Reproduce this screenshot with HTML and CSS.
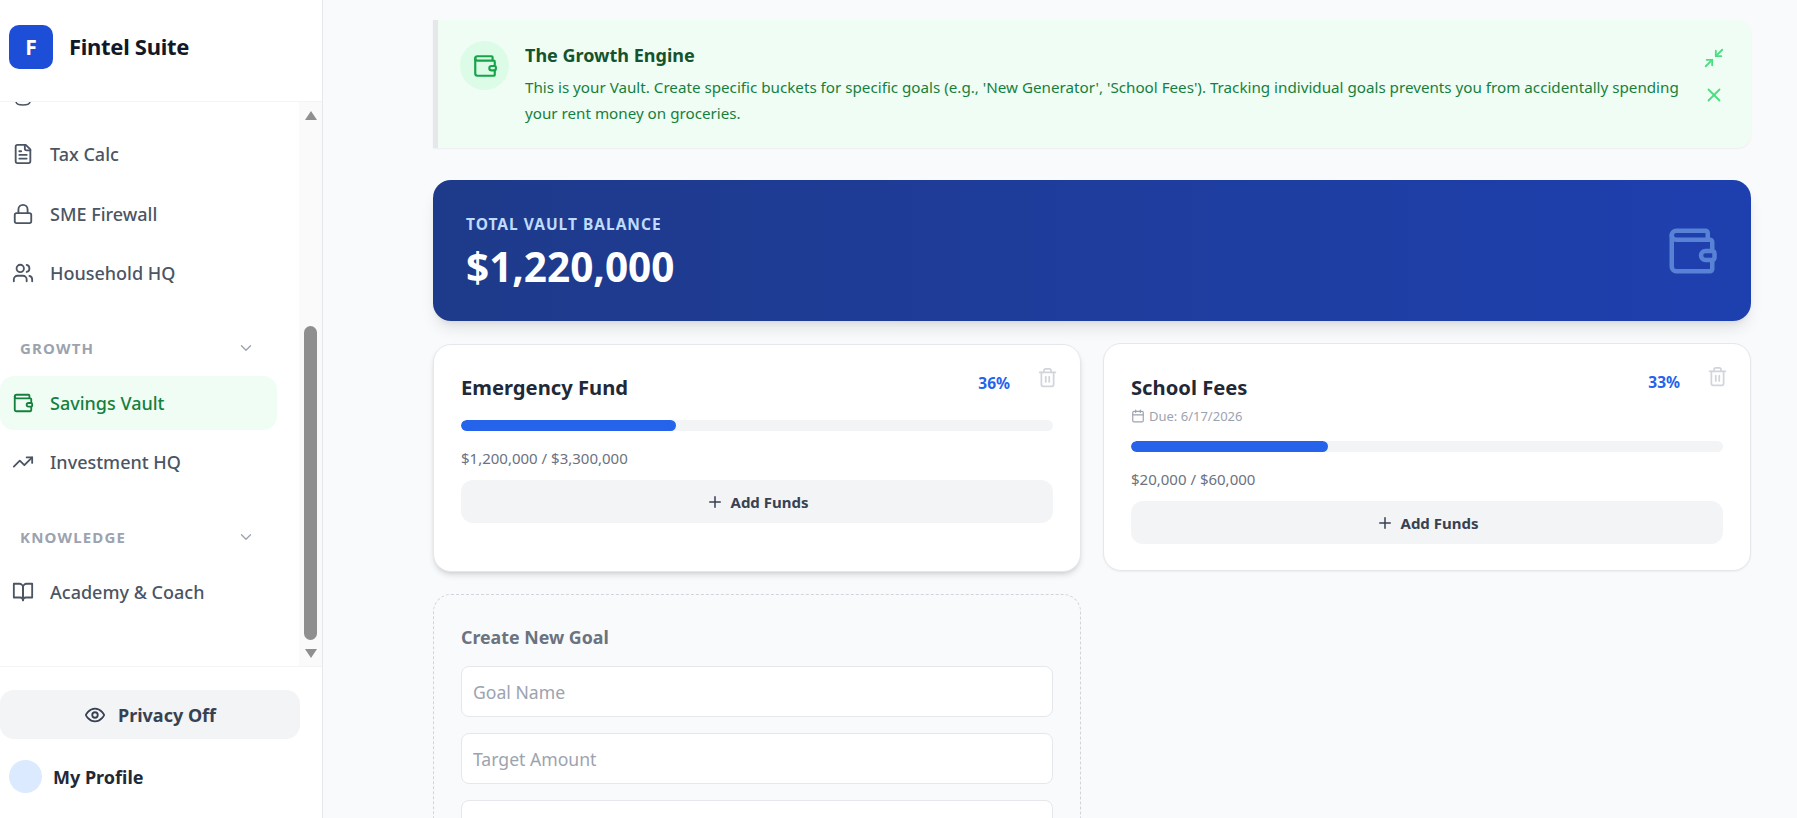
FILE: index.html
```html
<!DOCTYPE html>
<html>
	<head>
		<title>Savings Vault</title>
		<link rel="stylesheet" href="styles.css">
	</head>
	<body>
		<svg class="sprite">
			<symbol id="i-wallet" viewBox="0 0 24 24"><path d="M19 7V4a1 1 0 0 0-1-1H5a2 2 0 0 0 0 4h15a1 1 0 0 1 1 1v4h-3a2 2 0 0 0 0 4h3a1 1 0 0 0 1-1v-2a1 1 0 0 0-1-1"/><path d="M3 5v14a2 2 0 0 0 2 2h15a1 1 0 0 0 1-1v-4"/></symbol>
			<symbol id="i-file" viewBox="0 0 24 24"><path d="M15 2H6a2 2 0 0 0-2 2v16a2 2 0 0 0 2 2h12a2 2 0 0 0 2-2V7Z"/><path d="M14 2v4a2 2 0 0 0 2 2h4"/><path d="M10 9H8"/><path d="M16 13H8"/><path d="M16 17H8"/></symbol>
			<symbol id="i-lock" viewBox="0 0 24 24"><rect x="3" y="11" width="18" height="11" rx="2"/><path d="M7 11V7a5 5 0 0 1 10 0v4"/></symbol>
			<symbol id="i-users" viewBox="0 0 24 24"><path d="M16 21v-2a4 4 0 0 0-4-4H6a4 4 0 0 0-4 4v2"/><circle cx="9" cy="7" r="4"/><path d="M22 21v-2a4 4 0 0 0-3-3.87"/><path d="M16 3.13a4 4 0 0 1 0 7.75"/></symbol>
			<symbol id="i-trend" viewBox="0 0 24 24"><path d="M22 7 13.5 15.5 8.5 10.5 2 17"/><path d="M16 7h6v6"/></symbol>
			<symbol id="i-book" viewBox="0 0 24 24"><path d="M2 3h6a4 4 0 0 1 4 4v14a3 3 0 0 0-3-3H2z"/><path d="M22 3h-6a4 4 0 0 0-4 4v14a3 3 0 0 1 3-3h7z"/></symbol>
			<symbol id="i-chevron" viewBox="0 0 24 24"><path d="m6 9 6 6 6-6"/></symbol>
			<symbol id="i-eye" viewBox="0 0 24 24"><path d="M2 12s3-7 10-7 10 7 10 7-3 7-10 7-10-7-10-7Z"/><circle cx="12" cy="12" r="3"/></symbol>
			<symbol id="i-minimize" viewBox="0 0 24 24"><path d="M4 14h6v6"/><path d="M20 10h-6V4"/><path d="M14 10l7-7"/><path d="M3 21l7-7"/></symbol>
			<symbol id="i-x" viewBox="0 0 24 24"><path d="M18 6 6 18"/><path d="m6 6 12 12"/></symbol>
			<symbol id="i-plus" viewBox="0 0 24 24"><path d="M5 12h14"/><path d="M12 5v14"/></symbol>
			<symbol id="i-trash" viewBox="0 0 24 24"><path d="M3 6h18"/><path d="M19 6v14c0 1-1 2-2 2H7c-1 0-2-1-2-2V6"/><path d="M8 6V4c0-1 1-2 2-2h4c1 0 2 1 2 2v2"/><path d="M10 11v6"/><path d="M14 11v6"/></symbol>
			<symbol id="i-calendar" viewBox="0 0 24 24"><rect x="3" y="4" width="18" height="18" rx="2"/><path d="M16 2v4"/><path d="M8 2v4"/><path d="M3 10h18"/></symbol>
		</svg>

		<div class="app">
			<aside class="sidebar">
				<div class="brand">
					<div class="brand-logo">F</div>
					<div class="brand-name">Fintel Suite</div>
				</div>

				<div class="nav-wrap">
					<nav class="nav">
						<svg class="nav-clipped" viewBox="0 0 16 4"><path d="M1 0c.5 2 3 3 7 3s6.500-1 7-3"/></svg>
						<a class="nav-item"><svg class="icon"><use href="#i-file"/></svg>Tax Calc</a>
						<a class="nav-item"><svg class="icon"><use href="#i-lock"/></svg>SME Firewall</a>
						<a class="nav-item"><svg class="icon"><use href="#i-users"/></svg>Household HQ</a>

						<div class="nav-group">
							<span>GROWTH</span>
							<svg class="icon-chevron"><use href="#i-chevron"/></svg>
						</div>
						<a class="nav-item active"><svg class="icon"><use href="#i-wallet"/></svg>Savings Vault</a>
						<a class="nav-item"><svg class="icon"><use href="#i-trend"/></svg>Investment HQ</a>

						<div class="nav-group">
							<span>KNOWLEDGE</span>
							<svg class="icon-chevron"><use href="#i-chevron"/></svg>
						</div>
						<a class="nav-item"><svg class="icon"><use href="#i-book"/></svg>Academy &amp; Coach</a>
					</nav>

					<div class="scrollbar">
						<div class="arrow-up"></div>
						<div class="scroll-space"><div class="scroll-thumb"></div></div>
						<div class="arrow-down"></div>
					</div>
				</div>

				<div class="side-foot">
					<button class="privacy-btn"><svg class="icon"><use href="#i-eye"/></svg>Privacy Off</button>
					<div class="profile">
						<div class="avatar"></div>
						<span>My Profile</span>
					</div>
				</div>
			</aside>

			<main class="main">
				<section class="tip">
					<div class="tip-badge"><svg class="icon-tip"><use href="#i-wallet"/></svg></div>
					<div class="tip-body">
						<h3>The Growth Engine</h3>
						<p>This is your Vault. Create specific buckets for specific goals (e.g., 'New Generator', 'School Fees'). Tracking individual goals prevents you from accidentally spending your rent money on groceries.</p>
					</div>
					<div class="tip-actions">
						<svg class="icon-action"><use href="#i-minimize"/></svg>
						<svg class="icon-action"><use href="#i-x"/></svg>
					</div>
				</section>

				<section class="balance">
					<div>
						<div class="balance-label">TOTAL VAULT BALANCE</div>
						<div class="balance-value">$1,220,000</div>
					</div>
					<svg class="balance-icon"><use href="#i-wallet"/></svg>
				</section>

				<section class="goals">
					<div class="goal goal-hover">
						<svg class="goal-trash"><use href="#i-trash"/></svg>
						<div class="goal-head">
							<h4>Emergency Fund</h4>
							<span class="goal-pct">36%</span>
						</div>
						<div class="bar"><div class="bar-fill" style="width: 36.36%"></div></div>
						<div class="goal-amount">$1,200,000 / $3,300,000</div>
						<button class="add-btn"><svg class="icon-plus"><use href="#i-plus"/></svg>Add Funds</button>
					</div>

					<div class="goal">
						<svg class="goal-trash"><use href="#i-trash"/></svg>
						<div class="goal-head">
							<h4>School Fees</h4>
							<span class="goal-pct">33%</span>
						</div>
						<div class="goal-due"><svg class="icon-due"><use href="#i-calendar"/></svg>Due: 6/17/2026</div>
						<div class="bar"><div class="bar-fill" style="width: 33.33%"></div></div>
						<div class="goal-amount">$20,000 / $60,000</div>
						<button class="add-btn"><svg class="icon-plus"><use href="#i-plus"/></svg>Add Funds</button>
					</div>

					<form class="new-goal">
						<h4>Create New Goal</h4>
						<input class="field" type="text" placeholder="Goal Name">
						<input class="field" type="text" placeholder="Target Amount">
						<div class="field field-date"><div class="date-picker"></div></div>
					</form>
				</section>
			</main>
		</div>
	</body>
</html>
```

FILE: styles.css
```css
* {
	box-sizing: border-box;
}

html, body {
	height: 100%;
	margin: 0;
	overflow: hidden;
}

body {
	font-family: "Noto Sans", "Open Sans", sans-serif;
	background-color: #f9fafb;
	color: #1f2937;
}

svg {
	fill: none;
	stroke: currentColor;
	stroke-width: 2;
	stroke-linecap: round;
	stroke-linejoin: round;
	flex-shrink: 0;
}

.sprite {
	display: none;
}

.app {
	display: flex;
	height: 818px;
}

/* sidebar */
.sidebar {
	width: 323px;
	flex-shrink: 0;
	display: flex;
	flex-direction: column;
	background-color: #fff;
	border-right: 1px solid #e5e7eb;
}

.brand {
	height: 102px;
	flex-shrink: 0;
	display: flex;
	align-items: center;
	gap: 16px;
	padding: 0 0 8px 9px;
	border-bottom: 1px solid #f3f4f6;
}

.brand-logo {
	width: 44px;
	height: 44px;
	display: flex;
	align-items: center;
	justify-content: center;
	border-radius: 10px;
	background-color: #1d4ed8;
	color: #fff;
	font-size: 21px;
	font-weight: 700;
}

.brand-name {
	margin-top: -1px;
	font-size: 22px;
	font-weight: 700;
	color: #111827;
	letter-spacing: -0.3px;
}

.nav-wrap {
	height: 565px;
	flex-shrink: 0;
	display: flex;
	border-bottom: 1px solid #f3f4f6;
}

.nav {
	flex: 1;
	min-width: 0;
	overflow: hidden;
}

.nav-clipped {
	display: block;
	width: 16px;
	height: 4px;
	margin: 0 0 21px 15px;
	color: #4b5563;
	stroke-width: 1.5;
}

.nav-item {
	width: 277px;
	height: 54px;
	display: flex;
	align-items: center;
	gap: 16px;
	margin-bottom: 5.5px;
	padding-left: 12px;
	border-radius: 14px;
	font-size: 18px;
	font-weight: 500;
	color: #4b5563;
}

.nav-item.active {
	background-color: #f0fdf4;
	color: #15803d;
}

.icon {
	width: 22px;
	height: 22px;
}

.nav-group {
	width: 255px;
	height: 26px;
	display: flex;
	align-items: center;
	justify-content: space-between;
	margin: 34.500px 0 15px;
	padding-left: 20px;
	font-size: 15px;
	font-weight: 700;
	letter-spacing: 1.2px;
	color: #9ca3af;
}

.icon-chevron {
	width: 18px;
	height: 18px;
	stroke-width: 1.8;
}

.scrollbar {
	width: 23px;
	display: flex;
	flex-direction: column;
	align-items: center;
	padding: 9px 0 8px;
	background-color: #fafafa;
}

.arrow-up, .arrow-down {
	width: 0;
	height: 0;
	border-left: 6px solid transparent;
	border-right: 6px solid transparent;
}

.arrow-up {
	border-bottom: 9px solid #8f8f8f;
}

.arrow-down {
	border-top: 9px solid #8f8f8f;
}

.scroll-space {
	flex: 1;
	display: flex;
	align-items: flex-end;
	padding-bottom: 9px;
}

.scroll-thumb {
	width: 13px;
	height: 314px;
	border-radius: 7px;
	background-color: #8f8f8f;
}

.side-foot {
	padding-top: 23px;
}

.privacy-btn {
	width: 300px;
	height: 49px;
	display: flex;
	align-items: center;
	justify-content: center;
	gap: 12px;
	border: 0;
	border-radius: 14px;
	background-color: #f3f4f6;
	font-family: inherit;
	font-size: 18px;
	font-weight: 700;
	color: #374151;
}

.profile {
	display: flex;
	align-items: center;
	gap: 11px;
	margin-top: 21px;
	padding-left: 9px;
	font-size: 18px;
	font-weight: 700;
	color: #1f2937;
}

.avatar {
	width: 33px;
	height: 33px;
	border-radius: 50%;
	background-color: #dbeafe;
}

/* main column */
.main {
	flex: 1;
	min-width: 0;
	padding: 20px 46px 0 110px;
	overflow: hidden;
}

.tip {
	height: 128px;
	display: flex;
	gap: 16px;
	padding: 21px 24px 0 22px;
	border-left: 5px solid #e5e7eb;
	border-radius: 0 14px 14px 0;
	background-color: #f0fdf4;
	box-shadow: 0 1px 2px rgba(0, 0, 0, 0.05);
}

.tip-badge {
	width: 49px;
	height: 49px;
	flex-shrink: 0;
	display: flex;
	align-items: center;
	justify-content: center;
	border-radius: 50%;
	background-color: #dcfce7;
	color: #16a34a;
}

.icon-tip {
	width: 26px;
	height: 26px;
}

.tip-body {
	flex: 1;
	min-width: 0;
	padding-top: 1px;
}

.tip-body h3 {
	margin: 0 0 6px;
	font-size: 18px;
	line-height: 26px;
	font-weight: 700;
	color: #14532d;
}

.tip-body p {
	margin: 0;
	font-size: 15.200px;
	line-height: 26px;
	color: #15803d;
}

.tip-actions {
	width: 24px;
	display: flex;
	flex-direction: column;
	gap: 15px;
	margin-left: 2px;
	padding-top: 6px;
	color: #4ade80;
}

.icon-action {
	width: 22px;
	height: 22px;
}

.balance {
	height: 141px;
	display: flex;
	align-items: center;
	justify-content: space-between;
	margin-top: 32px;
	padding: 5px 32px 0 33px;
	border-radius: 18px;
	background: linear-gradient(90deg, #1e3a8a, #1e40af);
	box-shadow: 0 10px 15px -3px rgba(0, 0, 0, 0.1), 0 4px 6px -4px rgba(0, 0, 0, 0.1);
}

.balance-label {
	font-size: 15.500px;
	line-height: 20px;
	font-weight: 700;
	letter-spacing: 1px;
	color: #bfdbfe;
}

.balance-value {
	margin-top: 7px;
	font-size: 40.500px;
	line-height: 52px;
	font-weight: 700;
	color: #fff;
}

.balance-icon {
	width: 54px;
	height: 54px;
	margin-top: -5px;
	color: #93c5fd;
	opacity: 0.5;
}

.goals {
	display: grid;
	grid-template-columns: 1fr 1fr;
	gap: 22px;
	margin-top: 22px;
	align-items: start;
}

.goal {
	position: relative;
	min-height: 228px;
	padding: 27px 27px 24px;
	border: 1px solid #e5e7eb;
	border-radius: 18px;
	background-color: #fff;
	box-shadow: 0 1px 2px rgba(0, 0, 0, 0.05);
}

.goal-hover {
	margin-top: 1px;
	box-shadow: 0 4px 6px -1px rgba(0, 0, 0, 0.12), 0 2px 4px -2px rgba(0, 0, 0, 0.1);
}

.goal-head {
	display: flex;
	justify-content: space-between;
	padding-right: 43px;
}

.goal-head h4 {
	margin: 0;
	font-size: 20.200px;
	line-height: 32px;
	font-weight: 700;
	color: #1f2937;
}

.goal-hover .goal-head h4 {
	margin: -1px 0 1px;
}

.goal-pct {
	margin-top: -2px;
	font-size: 15.500px;
	line-height: 26px;
	font-weight: 700;
	color: #2563eb;
}

.goal-trash {
	position: absolute;
	top: 22px;
	right: 22px;
	width: 21px;
	height: 21px;
	color: #d1d5db;
}

.goal-due {
	display: flex;
	align-items: center;
	gap: 4px;
	margin: 4px 0 2px;
	font-size: 13px;
	line-height: 18px;
	color: #9ca3af;
}

.icon-due {
	width: 14px;
	height: 14px;
}

.bar {
	height: 11px;
	margin-top: 16px;
	border-radius: 6px;
	background-color: #f3f4f6;
	overflow: hidden;
}

.bar-fill {
	height: 100%;
	border-radius: 6px;
	background-color: #2563eb;
}

.goal-amount {
	margin-top: 16px;
	font-size: 15px;
	line-height: 22px;
	color: #6b7280;
}

.add-btn {
	width: 100%;
	height: 43px;
	display: flex;
	align-items: center;
	justify-content: center;
	gap: 7px;
	margin-top: 11px;
	border: 0;
	border-radius: 12px;
	background-color: #f3f4f6;
	font-family: inherit;
	font-size: 15px;
	font-weight: 700;
	color: #374151;
}

.icon-plus {
	width: 18px;
	height: 18px;
}

.new-goal {
	grid-column: 1;
	height: 300px;
	padding: 28px 27px 0;
	border: 1px dashed #d1d5db;
	border-radius: 18px;
}

.new-goal h4 {
	margin: 0 0 15px;
	font-size: 17.800px;
	line-height: 28px;
	font-weight: 700;
	color: #6b7280;
}

.field {
	display: block;
	width: 100%;
	height: 51px;
	margin-bottom: 16px;
	padding: 0 11px;
	border: 1px solid #e5e7eb;
	border-radius: 8px;
	background-color: #fff;
	font-family: inherit;
	font-size: 17.600px;
	color: #1f2937;
}

.field::placeholder {
	color: #9ca3af;
}

.field-date {
	display: flex;
	justify-content: flex-end;
	padding: 17px 17px 0 0;
}

.date-picker {
	width: 15px;
	height: 15px;
	background-color: #2b2f36;
}
```
